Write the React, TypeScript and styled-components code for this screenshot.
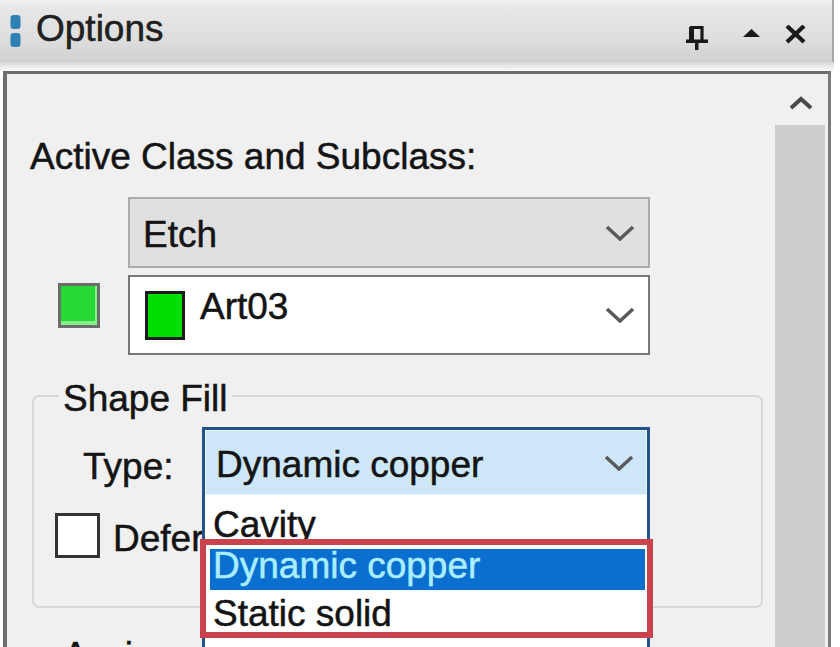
import React from "react";
import styled, { createGlobalStyle } from "styled-components";

const Global = createGlobalStyle`
  html, body { margin: 0; padding: 0; background: #ffffff; }
  body { font-family: "Liberation Sans", Arial, sans-serif; }
  * { box-sizing: border-box; }
`;

const Window = styled.div`
  width: 840px;
  height: 647px;
  overflow: hidden;
  display: flex;
  flex-direction: column;
  background: #ffffff;
  font-size: 37px;
  line-height: 42px;
  color: #141414;
  -webkit-text-stroke: 0.5px currentColor;
`;

const TitleBar = styled.div`
  height: 62px;
  flex: none;
  margin-right: 6px;
  display: flex;
  align-items: flex-start;
  padding: 8px 26px 0 10px;
  background: linear-gradient(#f3f3f3 0%, #e8e8e8 12%, #dddddd 65%, #d0d0d0 100%);
  border-right: 2px solid #a8a8a8;
`;

const GripIcon = styled.svg`
  flex: none;
  margin-top: 7px;
  margin-right: 15px;
`;

const Title = styled.div`
  color: #202020;
`;

const Controls = styled.div`
  margin-left: auto;
  margin-top: 17px;
  display: flex;
  align-items: flex-start;
`;

const CtlIcon = styled.svg<{ $gap: number }>`
  flex: none;
  margin-left: ${(p) => p.$gap}px;
`;

const Strip = styled.div`
  height: 9px;
  flex: none;
  margin-right: 6px;
  background: linear-gradient(#d6d6d6 0%, #e6e6e6 40%, #fbfbfb 100%);
`;

const Panel = styled.div`
  flex: 1;
  min-height: 0;
  display: flex;
  margin-left: 3px;
  margin-right: 9px;
  border-top: 3px solid #6e6e6e;
  border-left: 4px solid #6e6e6e;
  border-right: 3px solid #7b7b7b;
  background: #f0f0f0;
`;

const Content = styled.div`
  flex: 1;
  display: flex;
  flex-direction: column;
  padding-top: 62px;
  padding-right: 5px;
`;

const Heading = styled.div`
  margin-left: 23px;
`;

const ClassGrid = styled.div`
  margin-top: 19px;
  display: grid;
  grid-template-columns: 121px 522px;
  row-gap: 7px;
`;

const LayerSwatch = styled.div`
  width: 42px;
  height: 45px;
  margin: 8px 0 0 51px;
  border: 3px solid #6c6c6c;
  background: #26d936;
  box-shadow: inset -2px -4px 0 #84f08a;
`;

type ComboVariant = "disabled" | "normal" | "focused";

const Combo = styled.div<{ $variant: ComboVariant; $h: number; $pl: number }>`
  position: relative;
  height: ${(p) => p.$h}px;
  display: flex;
  align-items: center;
  padding: 0 13px 0 ${(p) => p.$pl}px;
  border: ${(p) => (p.$variant === "focused" ? "3px solid #22518b" : p.$variant === "disabled" ? "2px solid #ababab" : "2px solid #787878")};
  background: ${(p) => (p.$variant === "focused" ? "#cde6f8" : p.$variant === "disabled" ? "#e0e0e0" : "#ffffff")};
  ${(p) => (p.$variant === "focused" ? "box-shadow: inset 0 0 0 1px #e8f4fd;" : "")}
`;

const ComboText = styled.span<{ $shift: number }>`
  flex: 1;
  white-space: nowrap;
  padding: ${(p) => (p.$shift >= 0 ? `${p.$shift}px 0 0` : `0 0 ${-p.$shift}px`)};
`;

const ItemSwatch = styled.div`
  flex: none;
  width: 40px;
  height: 49px;
  margin-right: 15px;
  border: 3px solid #1b1b1b;
  background: #00de00;
`;

const Group = styled.fieldset`
  margin: 17px 5px 0 25px;
  padding: 7px 0 46px 0;
  border: 2px solid #d8d8d8;
  border-radius: 7px;
  min-width: 0;
`;

const Legend = styled.legend`
  margin-left: 25px;
  padding: 6px 4px 0;
  line-height: 42px;
`;

const TypeRow = styled.div`
  display: flex;
  align-items: flex-start;
  margin-left: 49px;
`;

const FieldLabel = styled.div`
  width: 119px;
  flex: none;
  margin-top: 19px;
`;

const DropList = styled.div`
  position: absolute;
  top: 100%;
  left: -3px;
  right: -3px;
  z-index: 3;
  background: #ffffff;
  border-left: 3px solid #24528c;
  border-right: 3px solid #24528c;
`;

const ListItem = styled.div<{ $h: number; $pt: number }>`
  height: ${(p) => p.$h}px;
  line-height: 42px;
  padding: ${(p) => p.$pt}px 0 0 8px;
  white-space: nowrap;
`;

const Marked = styled.div`
  position: relative;
  margin: 0 -6px 0 -5px;
  border: 6px solid #c8434c;
  padding: 4px 2px 0 4px;
  background: #ffffff;
`;

const MarkedItem = styled.div<{ $selected?: boolean; $h: number; $pt: number; $lh: number }>`
  height: ${(p) => p.$h}px;
  line-height: ${(p) => p.$lh}px;
  padding: ${(p) => p.$pt}px 0 0 3px;
  white-space: nowrap;
  background: ${(p) => (p.$selected ? "#0b6fd0" : "transparent")};
  color: ${(p) => (p.$selected ? "#aaeeff" : "#141414")};
`;

const CheckRow = styled.div`
  display: flex;
  align-items: flex-start;
  margin: 15px 0 0 21px;
`;

const CheckBox = styled.div`
  width: 45px;
  height: 45px;
  flex: none;
  border: 3px solid #333333;
  background: #ffffff;
  margin-right: 13px;
`;

const CheckText = styled.div`
  margin-top: 5px;
  white-space: nowrap;
`;

const Assign = styled.div`
  margin: 27px 0 0 56px;
`;

const ScrollBar = styled.div`
  width: 55px;
  flex: none;
  display: flex;
  flex-direction: column;
  background: #f0f0f0;
`;

const ScrollUp = styled.div`
  height: 51px;
  display: flex;
  align-items: center;
  justify-content: center;
  padding-top: 6px;
`;

const Thumb = styled.div`
  flex: 1;
  margin: 0 3px 0 2px;
  background: #cdcdcd;
`;

const Chevron = () => (
  <svg width="30" height="16" viewBox="0 0 30 16">
    <polyline points="2,2 15,14 28,2" fill="none" stroke="#5a5a5a" strokeWidth="3.5" />
  </svg>
);

export default function App() {
  return (
    <>
      <Global />
      <Window>
        <TitleBar>
          <GripIcon width="11" height="33" viewBox="0 0 11 33">
            <rect x="0.5" y="0" width="10" height="14" rx="3" fill="#2f80b3" />
            <rect x="0.5" y="18" width="10" height="14" rx="3" fill="#2f80b3" />
          </GripIcon>
          <Title>Options</Title>
          <Controls>
            <CtlIcon $gap={0} width="24" height="26" viewBox="0 0 24 26">
              <path d="M5 2.5h12v13" fill="none" stroke="#1a1a1a" strokeWidth="3.2" />
              <rect x="4" y="2" width="5" height="13" fill="#1a1a1a" />
              <rect x="1" y="14.5" width="22" height="3.5" fill="#1a1a1a" />
              <rect x="10" y="18" width="3.5" height="7" fill="#1a1a1a" />
            </CtlIcon>
            <CtlIcon $gap={34} width="17" height="26" viewBox="0 0 17 26">
              <polygon points="0,12 8.5,4 17,12" fill="#1a1a1a" />
            </CtlIcon>
            <CtlIcon $gap={25} width="21" height="26" viewBox="0 0 21 26">
              <path d="M2 1L19 17M19 1L2 17" stroke="#1a1a1a" strokeWidth="4.2" />
            </CtlIcon>
          </Controls>
        </TitleBar>
        <Strip />
        <Panel>
          <Content>
            <Heading>Active Class and Subclass:</Heading>
            <ClassGrid>
              <div />
              <Combo $variant="disabled" $h={71} $pl={13}>
                <ComboText $shift={5}>Etch</ComboText>
                <Chevron />
              </Combo>
              <LayerSwatch />
              <Combo $variant="normal" $h={80} $pl={15}>
                <ItemSwatch />
                <ComboText $shift={-16}>Art03</ComboText>
                <Chevron />
              </Combo>
            </ClassGrid>
            <Group>
              <Legend>Shape Fill</Legend>
              <TypeRow>
                <FieldLabel>Type:</FieldLabel>
                <Combo $variant="focused" $h={71} $pl={11} style={{ width: 448 }}>
                  <ComboText $shift={5}>Dynamic copper</ComboText>
                  <Chevron />
                  <DropList>
                    <ListItem $h={44} $pt={9}>Cavity</ListItem>
                    <Marked>
                      <MarkedItem $selected $h={41} $pt={0} $lh={33}>Dynamic copper</MarkedItem>
                      <MarkedItem $h={42} $pt={6} $lh={36}>Static solid</MarkedItem>
                    </Marked>
                    <ListItem $h={44} $pt={9}>Static crosshatch</ListItem>
                  </DropList>
                </Combo>
              </TypeRow>
              <CheckRow>
                <CheckBox />
                <CheckText>Defer performing dynamic fill</CheckText>
              </CheckRow>
            </Group>
            <Assign>Assign net name:</Assign>
          </Content>
          <ScrollBar>
            <ScrollUp>
              <svg width="24" height="14" viewBox="0 0 24 14">
                <polyline points="2,12 12,3 22,12" fill="none" stroke="#4a4a4a" strokeWidth="4" />
              </svg>
            </ScrollUp>
            <Thumb />
          </ScrollBar>
        </Panel>
      </Window>
    </>
  );
}
